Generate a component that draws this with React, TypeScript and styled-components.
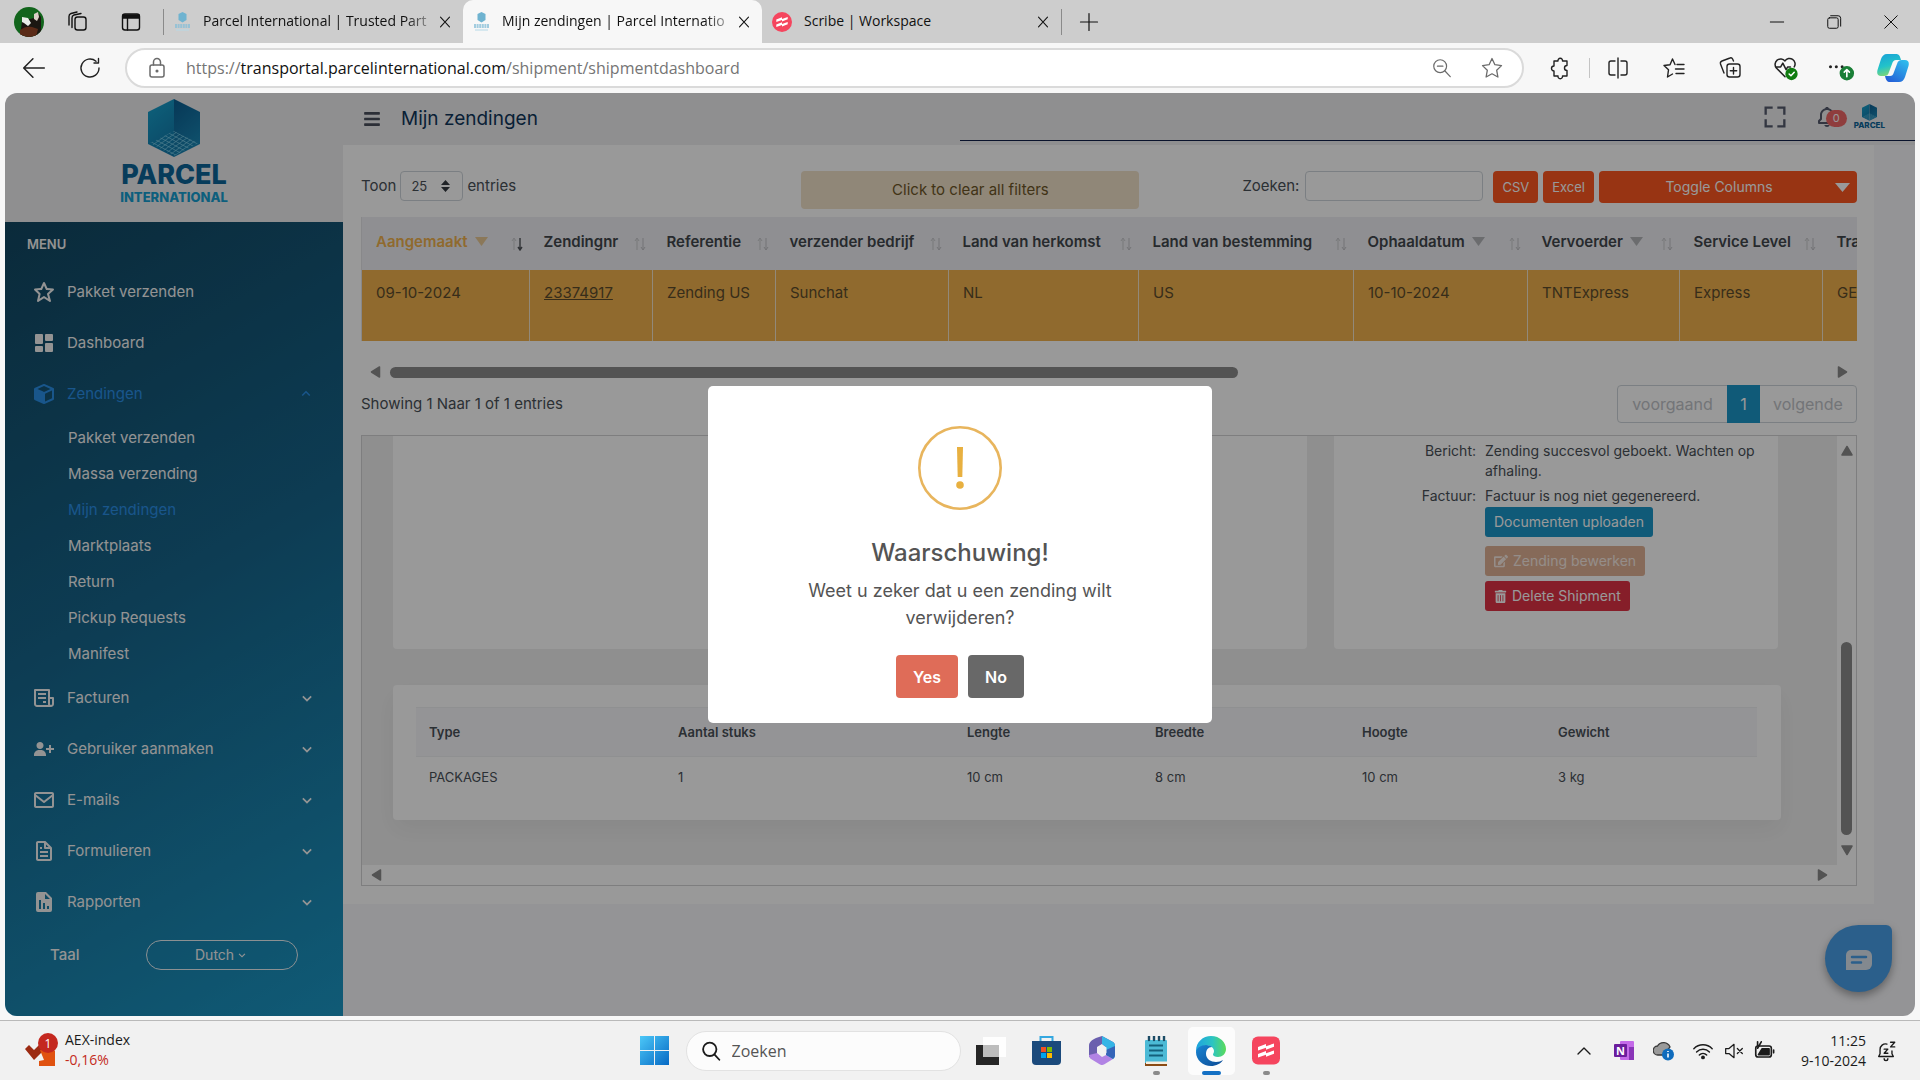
import React from "react";
import styled, { createGlobalStyle } from "styled-components";
import {
  BiStar, BiSolidDashboard, BiSolidCube, BiReceipt, BiSolidUserPlus, BiEnvelope, BiFile, BiSolidReport,
  BiChevronDown, BiChevronUp, BiFullscreen, BiBell,
} from "react-icons/bi";
import { FaEdit, FaTrashAlt, FaBars } from "react-icons/fa";

const ui = `Inter, "Open Sans", sans-serif`;
const system = `"Open Sans", "Noto Sans", sans-serif`;

const GlobalStyle = createGlobalStyle`
  *, *::before, *::after { box-sizing: border-box; }
  body { margin: 0; background: #f7f7f7; font-family: ${ui}; overflow: hidden; }
  button, input, select { font: inherit; color: inherit; }
  button { cursor: pointer; }
  h1, h2, p, ul, dl, dd, dt { margin: 0; padding: 0; }
  a { color: inherit; text-decoration: none; }
`;

/* ---------- window frame ---------- */

const Screen = styled.div`
  height: 100vh;
  display: flex;
  flex-direction: column;
`;

const TabStrip = styled.header`
  height: 43px;
  flex: none;
  display: flex;
  align-items: stretch;
  background: #cdcdcd;
  font: 14px/20px ${system};
  color: #111;
`;

const PlainButton = styled.button<{ $w: number }>`
  width: ${(p) => p.$w}px;
  flex: none;
  padding: 0;
  border: 0;
  background: none;
  display: flex;
  align-items: center;
  justify-content: center;
`;

const Profile = styled(PlainButton)`
  margin-left: 2px;
`;

const StripRule = styled.span`
  width: 1px;
  height: 26px;
  align-self: center;
  background: #8a8a8a;
`;

const Tab = styled.div<{ $active?: boolean }>`
  width: 299px;
  display: flex;
  align-items: center;
  padding: 0 6px 0 10px;
  background: ${(p) => (p.$active ? "#f7f7f7" : "transparent")};
  border-radius: 10px 10px 0 0;
`;

const TabTitle = styled.button<{ $fade?: boolean }>`
  flex: 1;
  min-width: 0;
  margin-left: 12px;
  padding: 0 0 2px;
  border: 0;
  background: none;
  text-align: left;
  white-space: nowrap;
  ${(p) => p.$fade && "mask-image: linear-gradient(90deg, #000 88%, rgba(0, 0, 0, 0.2));"}
`;

const WindowControls = styled.div`
  margin-left: auto;
  display: flex;
`;

const Toolbar = styled.div`
  height: 50px;
  flex: none;
  display: flex;
  align-items: center;
  padding: 0 3px 0 6px;
  background: #f7f7f7;
  color: #222;
`;

const AddressBar = styled.div`
  flex: 1;
  height: 40px;
  margin: 0 7px;
  display: flex;
  align-items: center;
  border: 2px solid #dadada;
  border-radius: 20px;
  background: #fff;
  color: #6b6b6b;
  padding: 0 5px 0 18px;
`;

const Address = styled.div`
  flex: 1;
  margin-left: 17px;
  font: 16px/24px ${system};
  color: #757575;
  white-space: nowrap;
  overflow: hidden;
  b { font-weight: 400; color: #111; }
`;

const ToolRule = styled.span`
  width: 1px;
  height: 20px;
  background: #c4c4c4;
`;

/* ---------- web page ---------- */

const Viewport = styled.div`
  flex: 1;
  min-height: 0;
  margin: 0 5px 4px;
  position: relative;
  display: flex;
  border-radius: 12px;
  overflow: hidden;
  background: #f7f7fa;
  color: #495057;
  font-size: 15px;
  line-height: 20px;
`;

const Sidebar = styled.aside`
  width: 338px;
  flex: none;
  display: flex;
  flex-direction: column;
`;

const Brand = styled.div`
  height: 129px;
  flex: none;
  padding-top: 6px;
  background: #eeeef1;
  display: flex;
  flex-direction: column;
  align-items: center;
`;

const BrandName = styled.strong`
  margin-top: 3px;
  font-weight: 800;
  font-size: 27px;
  line-height: 30px;
  color: #0c6598;
`;

const BrandSub = styled.span`
  font-weight: 800;
  font-size: 13px;
  line-height: 14px;
  color: #179fd0;
`;

const Menu = styled.nav`
  flex: 1;
  background: linear-gradient(150deg, #124762 0%, #16648a 45%, #1b97c5 100%);
  color: #f6f6f6;
`;

const MenuTitle = styled.div`
  height: 45px;
  padding: 12px 0 0 22px;
  font-size: 13px;
  font-weight: 600;
`;

const MenuItem = styled.a<{ $active?: boolean }>`
  height: 51px;
  display: grid;
  grid-template-columns: 24px 1fr 20px;
  column-gap: 11px;
  align-items: center;
  padding: 0 26px 2px 27px;
  color: ${(p) => (p.$active ? "#2a8fe8" : "inherit")};
`;

const SubMenu = styled.div`
  padding-bottom: 1px;
`;

const SubItem = styled.a<{ $active?: boolean }>`
  display: block;
  height: 36px;
  padding-left: 63px;
  line-height: 36px;
  color: ${(p) => (p.$active ? "#2a8fe8" : "inherit")};
`;

const Language = styled.div`
  display: flex;
  align-items: center;
  justify-content: space-between;
  padding: 12px 45px 0;
  label { font-weight: 500; }
`;

const LanguagePill = styled.div`
  width: 152px;
  height: 30px;
  display: flex;
  align-items: center;
  justify-content: center;
  border: 1px solid #e8f0f4;
  border-radius: 15px;
  font-size: 14px;
`;

const BareSelect = styled.select`
  appearance: none;
  border: 0;
  padding: 0;
  background: transparent;
`;

const Main = styled.main`
  flex: 1;
  min-width: 0;
`;

const PageHead = styled.div`
  height: 52px;
  display: flex;
  align-items: center;
  background: #eeeef1;
  padding: 0 30px 0 10px;
`;

const PageTitle = styled.h1`
  font-size: 19px;
  font-weight: 400;
  line-height: 24px;
  color: #10365a;
  margin-left: 10px;
`;

const HeadTools = styled.div`
  margin-left: auto;
  padding-bottom: 5px;
  display: flex;
  align-items: center;
  color: #555b6d;
`;

const BellButton = styled(PlainButton)`
  position: relative;
`;

const Badge = styled.span`
  position: absolute;
  left: 24px;
  top: 5px;
  width: 21px;
  height: 17px;
  border-radius: 9px;
  background: #ef6767;
  color: #fff;
  font-size: 11px;
  line-height: 17px;
  text-align: center;
`;

const MiniLogo = styled.span`
  display: flex;
  flex-direction: column;
  align-items: center;
  margin-left: 2px;
  font-size: 8px;
  line-height: 8px;
  font-weight: 800;
  color: #0c6598;
`;

const LoadLine = styled.div`
  height: 1px;
  margin-top: -5px;
  margin-left: 617px;
  background: #12204a;
`;

const Card = styled.section`
  margin: 4px 41px 0 0;
  padding: 26px 17px 18px 18px;
  background: #fff;
`;

const Controls = styled.div`
  display: flex;
  align-items: flex-start;
  height: 46px;
`;

const Length = styled.label`
  display: flex;
  align-items: center;
  gap: 4px;
  height: 30px;
`;

const LengthBox = styled.span`
  width: 63px;
  height: 30px;
  display: flex;
  align-items: center;
  justify-content: space-between;
  padding: 0 12px 0 10px;
  border: 1px solid #ced4da;
  border-radius: 4px;
  font-size: 13px;
  select { width: 24px; }
`;

const ClearFilters = styled.button`
  width: 338px;
  height: 38px;
  margin-left: auto;
  border: 0;
  border-radius: 4px;
  background: #f0e1c8;
  color: #6d5627;
`;

const Search = styled.label`
  display: flex;
  align-items: center;
  gap: 6px;
  height: 30px;
  margin-left: 103px;
`;

const SearchInput = styled.input`
  width: 178px;
  height: 30px;
  border: 1px solid #ced4da;
  border-radius: 4px;
  background: #fff;
`;

const ExportButtons = styled.div`
  display: flex;
  gap: 5px;
  margin-left: 10px;
`;

const OrangeButton = styled.button`
  height: 32px;
  padding: 0 9px;
  border: 0;
  border-radius: 4px;
  background: #fd5720;
  color: #fff;
  font-size: 13px;
`;

const ToggleBox = styled.div`
  width: 258px;
  height: 32px;
  margin-left: 5px;
  display: flex;
  align-items: center;
  padding: 0 7px 0 4px;
  border-radius: 4px;
  background: #fd5720;
  color: #fff;
  font-size: 14px;
  select { flex: 1; text-align: center; text-align-last: center; }
  option { color: #222; }
`;

const TableClip = styled.div`
  overflow: hidden;
`;

const ShipmentTable = styled.table`
  width: 100%;
  min-width: 1700px;
  table-layout: fixed;
  border-collapse: collapse;
  border-left: 1px solid #e3e3e6;
  th {
    height: 53px;
    padding: 0 7px 4px 14px;
    background: #eeeff3;
    font-weight: 600;
    text-align: left;
    white-space: nowrap;
  }
  td {
    height: 71px;
    padding: 13px 13px 13px 14px;
    vertical-align: top;
    background: #f0b14d;
    color: #5d4c2c;
    border-right: 1px solid #f3e5cb;
  }
  td a { text-decoration: underline; }
`;

const HeadCell = styled.div<{ $active?: boolean }>`
  display: flex;
  align-items: center;
  gap: 7px;
  color: ${(p) => (p.$active ? "#f0b14d" : "#41464c")};
  > :last-child { margin-left: auto; }
`;

const HScroll = styled.div`
  display: flex;
  align-items: center;
  gap: 8px;
  height: 20px;
  padding: 0 9px;
  color: #8a8a8a;
`;

const HTrack = styled.div`
  flex: 1;
`;

const HThumb = styled.div`
  width: 59%;
  height: 11px;
  border-radius: 6px;
  background: #8a8a8a;
`;

const TableScroll = styled(HScroll)`
  margin-top: 21px;
`;

const TableFoot = styled.div`
  display: flex;
  justify-content: space-between;
  align-items: center;
  margin-top: 3px;
  margin-bottom: 12px;
`;

const Pager = styled.div`
  display: flex;
  height: 38px;
  border: 1px solid #ced4da;
  border-radius: 4px;
  font-size: 16px;
`;

const PagerButton = styled.button<{ $current?: boolean; $w: number }>`
  width: ${(p) => p.$w}px;
  margin: -1px 0;
  padding: 0;
  border: 0;
  background: ${(p) => (p.$current ? "#1b96c8" : "transparent")};
  color: ${(p) => (p.$current ? "#fff" : "#bfc3c8")};
`;

const Detail = styled.section`
  border: 1px solid #d2d2d4;
  display: grid;
  grid-template-columns: 1fr 19px;
`;

const DetailBody = styled.div`
  background: #efefef;
  padding: 0 56px 45px 31px;
`;

const DetailTop = styled.div`
  display: grid;
  grid-template-columns: 1fr 444px;
  gap: 27px;
  padding-right: 3px;
`;

const Panel = styled.div`
  min-height: 213px;
  background: #fff;
  border-radius: 0 0 4px 4px;
`;

const Facts = styled(Panel)`
  display: grid;
  grid-template-columns: 142px 280px;
  grid-template-rows: 45px auto;
  column-gap: 9px;
  padding-top: 5px;
  font-size: 14px;
  dt { text-align: right; }
`;

const Actions = styled.div`
  display: flex;
  flex-direction: column;
  align-items: flex-start;
`;

const ActionButton = styled.button<{ $bg: string; $top?: number }>`
  height: 30px;
  margin-top: ${(p) => p.$top ?? 0}px;
  padding: 0 9px;
  border: 0;
  border-radius: 3px;
  display: flex;
  align-items: center;
  gap: 5px;
  background: ${(p) => p.$bg};
  color: #fff;
  font-size: 14px;
  &:disabled { color: #f8ece4; }
`;

const Packages = styled.div`
  margin-top: 36px;
  padding: 22px 24px 25px 23px;
  height: 135px;
  background: #fff;
  border-radius: 4px;
  box-shadow: 0 10px 24px rgba(0, 0, 0, 0.05);
`;

const PackageTable = styled.table`
  width: 100%;
  table-layout: fixed;
  border-collapse: collapse;
  font-size: 13px;
  th, td { text-align: left; padding: 0 13px; height: 49px; }
  th { background: #f7f7fb; font-weight: 600; border-bottom: 1px solid #eff0f2; border-top: 1px solid #eff0f2; }
  td { height: 40px; }
`;

const VScroll = styled.div`
  display: flex;
  flex-direction: column;
  align-items: center;
  padding: 9px 0 9px;
  color: #8a8a8a;
`;

const VThumb = styled.div`
  width: 11px;
  height: 193px;
  margin-top: auto;
  margin-bottom: 9px;
  border-radius: 6px;
  background: #8a8a8a;
`;

const DetailScroll = styled(HScroll)`
  justify-content: space-between;
`;

const Chat = styled.button`
  position: absolute;
  right: 23px;
  bottom: 24px;
  width: 67px;
  height: 67px;
  padding: 7px 0 0;
  border: 0;
  border-radius: 34px 6px 34px 34px;
  background: #489fe8;
  box-shadow: 0 4px 8px rgba(0, 0, 0, 0.35);
`;

/* ---------- dialog ---------- */

const Backdrop = styled.div`
  position: absolute;
  inset: 0;
  display: flex;
  align-items: center;
  justify-content: center;
  background: rgba(0, 0, 0, 0.4);
`;

const Dialog = styled.div`
  width: 504px;
  padding: 40px 60px 25px;
  display: flex;
  flex-direction: column;
  align-items: center;
  border-radius: 5px;
  background: #fff;
  color: #545454;
  text-align: center;
  h2 { margin-top: 26px; font-size: 24px; line-height: 34px; font-weight: 500; }
  p { margin-top: 7px; font-size: 18px; line-height: 27px; }
`;

const DialogButtons = styled.div`
  display: flex;
  gap: 10px;
  margin-top: 24px;
`;

const DialogButton = styled.button<{ $bg: string }>`
  height: 43px;
  padding: 0 17px;
  border: 0;
  border-radius: 4px;
  background: ${(p) => p.$bg};
  color: #fff;
  font-size: 16px;
  font-weight: 600;
`;

/* ---------- taskbar ---------- */

const Taskbar = styled.footer`
  height: 60px;
  flex: none;
  display: grid;
  grid-template-columns: 1fr auto 1fr;
  align-items: center;
  border-top: 1px solid #b9b9b9;
  background: #f1f1f1;
  color: #1b1b1b;
  font: 14px/20px ${system};
`;

const Widget = styled.button`
  justify-self: start;
  margin-left: 25px;
  padding: 0 0 2px;
  border: 0;
  background: none;
  display: flex;
  align-items: center;
  gap: 6px;
  text-align: left;
  line-height: 20px;
  small { display: block; font-size: 14px; color: #c42b1c; }
`;

const Dock = styled.div`
  display: flex;
  align-items: center;
`;

const DockButton = styled.button<{ $open?: boolean; $focus?: boolean }>`
  width: 47px;
  height: 48px;
  margin: 0 4px;
  padding: 0;
  border: 0;
  border-radius: 5px;
  display: flex;
  align-items: center;
  justify-content: center;
  position: relative;
  background: ${(p) => (p.$focus ? "#fcfcfc" : "transparent")};
  &::after {
    content: "";
    position: absolute;
    bottom: 0;
    width: ${(p) => (p.$focus ? 19 : 7)}px;
    height: 4px;
    border-radius: 2px;
    background: ${(p) => (p.$focus ? "#1470c4" : p.$open ? "#8b8b8b" : "transparent")};
  }
`;

const DockSearch = styled.label`
  width: 275px;
  height: 40px;
  margin: 0 3px 0 4px;
  display: flex;
  align-items: center;
  gap: 11px;
  padding: 0 14px;
  border: 1px solid #e2e2e2;
  border-radius: 20px;
  background: #fcfcfc;
  input {
    flex: 1;
    min-width: 0;
    border: 0;
    padding: 0;
    background: none;
    outline: none;
    font-size: 16px;
  }
  input::placeholder { color: #555; opacity: 1; }
`;

const Tray = styled.div`
  justify-self: end;
  display: flex;
  align-items: center;
  padding-right: 14px;
`;

const Clock = styled.div`
  width: 84px;
  text-align: right;
  white-space: nowrap;
`;

/* ---------- drawings ---------- */

const Line = ({ size = 22, w = 1.4, children }: { size?: number; w?: number; children: React.ReactNode }) => (
  <svg width={size} height={size} viewBox="0 0 24 24" fill="none" stroke="currentColor" strokeWidth={w} strokeLinecap="round" strokeLinejoin="round" aria-hidden>
    {children}
  </svg>
);

const CloseIcon = () => <Line size={18}><path d="M6 5.5l12 13M18 5.5l-12 13" /></Line>;

const Cube = ({ size }: { size: number }) => (
  <svg width={size} height={(size * 58) / 52} viewBox="0 0 52 58" aria-hidden>
    <defs>
      <linearGradient id="cubeRight" x1="0" y1="0" x2="0.4" y2="1"><stop offset="0" stopColor="#0b5d90" /><stop offset="1" stopColor="#1a86b4" /></linearGradient>
      <linearGradient id="cubeLeft" x1="0" y1="0" x2="0.4" y2="1"><stop offset="0" stopColor="#18a4cf" /><stop offset="1" stopColor="#127bac" /></linearGradient>
      <pattern id="cubeGrid" width="4" height="4" patternUnits="userSpaceOnUse" patternTransform="rotate(28) skewX(-26)">
        <path d="M0 0H4M0 0V4" stroke="#7fd0ea" strokeWidth="1.3" />
      </pattern>
    </defs>
    <path d="M26 0L0 13v32l26 13z" fill="url(#cubeLeft)" />
    <path d="M26 0l26 13v32L26 58z" fill="url(#cubeRight)" />
    <path d="M26 32l24 12-24 13L2 44z" fill="url(#cubeGrid)" />
  </svg>
);

const Favicon = () => (
  <svg width="17" height="20" viewBox="0 0 17 20" aria-hidden>
    <path d="M8.500 0l4 2v6l-4 2.500-4-2.500v-6z" fill="#6fb3d0" />
    <path d="M1 13h15M1 15h15" stroke="#86bfd8" strokeWidth="1.600" strokeDasharray="2 .6" />
    <path d="M2 18h13" stroke="#b5d9e8" />
  </svg>
);

const ScribeMark = ({ round }: { round?: boolean }) => (
  <svg width={round ? 20 : 28} height={round ? 20 : 29} viewBox="0 0 28 28" aria-hidden>
    <rect width="28" height="28" rx={round ? 14 : 6} fill="#f5455e" />
    <path d="M6 10.500l8-3v2.200l8-2.700v3.300l-8 3v-2.100l-8 2.700z" fill="#fff" />
    <path d="M6 17.500l8-3v2.200l8-2.700v3.300l-8 3v-2.100l-8 2.700z" fill="#fff" />
  </svg>
);

const SortArrows = ({ desc }: { desc?: boolean }) => (
  <svg width="12" height="18" viewBox="0 0 12 18" fill="none" aria-hidden>
    <path d="M3 17V5M1 8l2-3 2 3" stroke="#c9cacd" />
    <path d="M9 5v12M7 14l2 3 2-3" stroke={desc ? "#50545a" : "#c0c1c5"} strokeWidth={desc ? 1.4 : 1} />
  </svg>
);

const Funnel = ({ active }: { active?: boolean }) => (
  <svg width="13" height="9" viewBox="0 0 13 9" aria-hidden><path d="M0 0h13L6.500 9z" fill={active ? "#e8c894" : "#b3b4b8"} /></svg>
);

const Arrow = ({ dir }: { dir: "left" | "right" | "up" | "down" }) => {
  const d = { left: "M9.500 1v10L1.500 6z", right: "M2.500 1v10l8-5z", up: "M1 10h10L6 1.500z", down: "M1 2h10L6 10.500z" }[dir];
  return (
    <svg width="12" height="12" viewBox="0 0 12 12" aria-hidden>
      <path d={d} fill="currentColor" stroke="currentColor" strokeWidth="1.500" strokeLinejoin="round" />
    </svg>
  );
};

const Copilot = () => (
  <svg width="32" height="28" viewBox="0 0 32 28" aria-hidden>
    <defs>
      <linearGradient id="cpA" x1="0" y1="0" x2="0.3" y2="1"><stop offset="0" stopColor="#18a0d8" /><stop offset=".6" stopColor="#22c3c9" /><stop offset="1" stopColor="#7bd67a" /></linearGradient>
      <linearGradient id="cpB" x1="1" y1="0" x2="0.3" y2="1"><stop offset="0" stopColor="#2ec4ef" /><stop offset="1" stopColor="#2563d8" /></linearGradient>
    </defs>
    <path d="M10 0h9c3 0 4 2 5 6h-5c-2 0-3 1-4 4l-3 8c-1 3-2 4-5 4H4c-3 0-4.500-2-3.500-6L4 5c1-3 3-5 6-5z" fill="url(#cpA)" />
    <path d="M22 28h-9c-3 0-4-2-5-6h5c2 0 3-1 4-4l3-8c1-3 2-4 5-4h3c3 0 4.500 2 3.500 6L28 23c-1 3-3 5-6 5z" fill="url(#cpB)" />
  </svg>
);

/* ---------- data ---------- */

const columns: { label: string; value: React.ReactNode; width?: number; filter?: boolean; active?: boolean }[] = [
  { label: "Aangemaakt", value: "09-10-2024", width: 168, filter: true, active: true },
  { label: "Zendingnr", value: <a href="#23374917">23374917</a>, width: 123 },
  { label: "Referentie", value: "Zending US", width: 123 },
  { label: "verzender bedrijf", value: "Sunchat", width: 173 },
  { label: "Land van herkomst", value: "NL", width: 190 },
  { label: "Land van bestemming", value: "US", width: 215 },
  { label: "Ophaaldatum", value: "10-10-2024", width: 174, filter: true },
  { label: "Vervoerder", value: "TNTExpress", width: 152, filter: true },
  { label: "Service Level", value: "Express", width: 143 },
  { label: "Tra", value: "GE" },
];

const packageColumns: [string, string, number][] = [
  ["Type", "PACKAGES", 249],
  ["Aantal stuks", "1", 289],
  ["Lengte", "10 cm", 188],
  ["Breedte", "8 cm", 207],
  ["Hoogte", "10 cm", 196],
  ["Gewicht", "3 kg", 212],
];

const mainItems = [
  { label: "Pakket verzenden", icon: BiStar },
  { label: "Dashboard", icon: BiSolidDashboard },
];
const subItems = ["Pakket verzenden", "Massa verzending", "Mijn zendingen", "Marktplaats", "Return", "Pickup Requests", "Manifest"];
const groups = [
  { label: "Facturen", icon: BiReceipt },
  { label: "Gebruiker aanmaken", icon: BiSolidUserPlus },
  { label: "E-mails", icon: BiEnvelope },
  { label: "Formulieren", icon: BiFile },
  { label: "Rapporten", icon: BiSolidReport },
];

/* ---------- sections ---------- */

const BrowserChrome = () => (
  <>
    <TabStrip>
      <Profile $w={53} aria-label="Profiel">
        <svg width="30" height="30" viewBox="0 0 30 30" aria-hidden>
          <defs><clipPath id="face"><circle cx="15" cy="15" r="15" /></clipPath></defs>
          <g clipPath="url(#face)">
            <rect width="30" height="30" fill="#12651c" />
            <path d="M8 14l12-3 4-5 3 4v20H6z" fill="#1b1712" />
            <path d="M8 10l6 1 3 5-3 3-4-3-2-1z" fill="#e9eee8" />
            <path d="M20 7l4-2 1 5-2 4-3-2z" fill="#d9cfc6" />
            <path d="M6 23c4-3 8-4 12-3l6 2-2 8H6z" fill="#5b2b18" />
          </g>
        </svg>
      </Profile>
      <PlainButton $w={44} aria-label="Werkruimten">
        <Line size={24}><rect x="10" y="7" width="11" height="13" rx="2.500" /><path d="M7 17.500V8a3 3 0 0 1 2-3l7-1.500M4 15V6.500a3 3 0 0 1 2-3l6-1.500" /></Line>
      </PlainButton>
      <PlainButton $w={64} aria-label="Tabbladacties">
        <Line size={24}><rect x="3.500" y="4" width="17" height="16" rx="2.500" /><path d="M4 5h16v3H4z" fill="currentColor" /><path d="M8.500 8v12" /></Line>
      </PlainButton>
      <StripRule />
      <Tab>
        <Favicon />
        <TabTitle $fade>Parcel International | Trusted Part</TabTitle>
        <PlainButton $w={24} aria-label="Sluiten"><CloseIcon /></PlainButton>
      </Tab>
      <Tab $active>
        <Favicon />
        <TabTitle $fade>Mijn zendingen | Parcel Internatio</TabTitle>
        <PlainButton $w={24} aria-label="Sluiten"><CloseIcon /></PlainButton>
      </Tab>
      <Tab>
        <ScribeMark round />
        <TabTitle>Scribe | Workspace</TabTitle>
        <PlainButton $w={24} aria-label="Sluiten"><CloseIcon /></PlainButton>
      </Tab>
      <StripRule />
      <PlainButton $w={54} aria-label="Nieuw tabblad"><Line size={24} w={1.2}><path d="M12 3.500v17M3.500 12h17" /></Line></PlainButton>
      <WindowControls>
        <PlainButton $w={57} aria-label="Minimaliseren"><Line size={20} w={1.2}><path d="M4 12h16" /></Line></PlainButton>
        <PlainButton $w={57} aria-label="Verkleinen"><Line size={20} w={1.2}><rect x="4.500" y="7" width="12.500" height="12.500" rx="2" /><path d="M8 4.500h9a3 3 0 0 1 3 3V17" /></Line></PlainButton>
        <PlainButton $w={58} aria-label="Venster sluiten"><Line size={20} w={1.2}><path d="M4.500 4.500l15 15M19.500 4.500l-15 15" /></Line></PlainButton>
      </WindowControls>
    </TabStrip>
    <Toolbar>
      <PlainButton $w={56} aria-label="Terug"><Line size={26}><path d="M21.500 12H3M11 3.500L2.500 12l8.500 8.500" /></Line></PlainButton>
      <PlainButton $w={56} aria-label="Vernieuwen"><Line size={24}><path d="M21 12a9 9 0 1 1-3-6.700M20.500 2.500V7H16" /></Line></PlainButton>
      <AddressBar>
        <Line size={24} w={1.5}><rect x="5" y="9" width="14" height="12" rx="2" /><path d="M8.500 9V6a3.500 3.500 0 0 1 7 0v3" /><circle cx="12" cy="15" r=".8" fill="currentColor" /></Line>
        <Address role="textbox" aria-label="Adres" tabIndex={0}>https://<b>transportal.parcelinternational.com</b>/shipment/shipmentdashboard</Address>
        <PlainButton $w={50} aria-label="Zoom"><Line size={22} w={1.3}><circle cx="10" cy="10" r="7" /><path d="M15 15l6 6.500M7 10h6" /></Line></PlainButton>
        <PlainButton $w={50} aria-label="Favoriet"><Line size={24} w={1.3}><path d="M12 2.500l2.900 6.200 6.600.9-4.800 4.700 1.200 6.700-5.900-3.200L6.100 21l1.200-6.700L2.500 9.600l6.600-.9z" /></Line></PlainButton>
      </AddressBar>
      <PlainButton $w={58} aria-label="Extensies">
        <Line size={24}><path d="M6 5h4a2.300 2.300 0 1 1 4.500 0H19v4.500a2.300 2.300 0 1 0 0 5V20h-4.500a2.300 2.300 0 1 1-4.500 0H6v-5a2.500 2.500 0 1 1 0-5z" /></Line>
      </PlainButton>
      <ToolRule />
      <PlainButton $w={56} aria-label="Splitsen"><Line size={24}><path d="M12 2v20M9 5H5a2 2 0 0 0-2 2v10a2 2 0 0 0 2 2h4M15 5h4a2 2 0 0 1 2 2v10a2 2 0 0 1-2 2h-4" /></Line></PlainButton>
      <PlainButton $w={56} aria-label="Favorieten"><Line size={24}><path d="M13 8.500l-2.500-5.500L8 8.700l-6 .8 4.500 4.300L5.500 21l5-3M15 8.500h7M13.500 13H22M14 17.500h8" /></Line></PlainButton>
      <PlainButton $w={55} aria-label="Verzamelingen"><Line size={24}><rect x="9" y="8" width="13" height="13" rx="2.500" /><path d="M15.500 11.500v6.500M12.300 14.700h6.400M6 17l-3.500-9A2.500 2.500 0 0 1 4 5l8-3a2 2 0 0 1 2.600 1l.9 2" /></Line></PlainButton>
      <PlainButton $w={56} aria-label="Prestaties">
        <Line size={26}><path d="M12 20l-8-8a5 5 0 0 1 8-6.500A5 5 0 0 1 20.500 11M3.500 11H8l2-3.500 3 6 1.500-2.500H17" /><circle cx="18" cy="17.500" r="5" fill="#107c10" stroke="#107c10" /><path d="M15.800 17.500l1.700 1.700 3-3.200" stroke="#fff" /></Line>
      </PlainButton>
      <PlainButton $w={56} aria-label="Instellingen en meer">
        <Line size={28}><g fill="currentColor" stroke="none"><circle cx="3" cy="11" r="1.300" /><circle cx="8" cy="11" r="1.300" /><circle cx="13" cy="11" r="1.300" /></g><circle cx="17" cy="16.500" r="5.500" fill="#1a7f37" stroke="#1a7f37" /><path d="M17 19.500v-6M14.800 15.500l2.200-2.200 2.200 2.200" stroke="#fff" /></Line>
      </PlainButton>
      <PlainButton $w={48} aria-label="Copilot"><Copilot /></PlainButton>
    </Toolbar>
  </>
);

const SideMenu = () => (
  <Sidebar>
    <Brand>
      <Cube size={52} />
      <BrandName>PARCEL</BrandName>
      <BrandSub>INTERNATIONAL</BrandSub>
    </Brand>
    <Menu>
      <MenuTitle>MENU</MenuTitle>
      {mainItems.map(({ label, icon: Icon }) => (
        <MenuItem key={label} href="#menu"><Icon size={24} />{label}</MenuItem>
      ))}
      <MenuItem href="#zendingen" $active><BiSolidCube size={24} />Zendingen<BiChevronUp size={18} /></MenuItem>
      <SubMenu>
        {subItems.map((label) => (
          <SubItem key={label} href="#sub" $active={label === "Mijn zendingen"}>{label}</SubItem>
        ))}
      </SubMenu>
      {groups.map(({ label, icon: Icon }) => (
        <MenuItem key={label} href="#menu"><Icon size={24} />{label}<BiChevronDown size={20} /></MenuItem>
      ))}
      <Language>
        <label htmlFor="language">Taal</label>
        <LanguagePill>
          <BareSelect id="language" defaultValue="Dutch"><option>Dutch</option></BareSelect>
          <BiChevronDown size={14} />
        </LanguagePill>
      </Language>
    </Menu>
  </Sidebar>
);

const Shipments = () => (
  <TableClip>
    <ShipmentTable>
      <colgroup>{columns.map((c) => <col key={c.label} width={c.width} />)}</colgroup>
      <thead>
        <tr>
          {columns.map((c) => (
            <th key={c.label} scope="col">
              <HeadCell $active={c.active}>
                {c.label}
                {c.filter && <Funnel active={c.active} />}
                <SortArrows desc={c.active} />
              </HeadCell>
            </th>
          ))}
        </tr>
      </thead>
      <tbody><tr>{columns.map((c) => <td key={c.label}>{c.value}</td>)}</tr></tbody>
    </ShipmentTable>
  </TableClip>
);

const ShipmentDetail = () => (
  <Detail>
    <DetailBody>
      <DetailTop>
        <Panel />
        <Facts as="dl">
          <dt>Bericht:</dt>
          <dd>Zending succesvol geboekt. Wachten op afhaling.</dd>
          <dt>Factuur:</dt>
          <dd>
            Factuur is nog niet gegenereerd.
            <Actions>
              <ActionButton $bg="#1b96c8" $top={1}>Documenten uploaden</ActionButton>
              <ActionButton $bg="#dfb194" $top={9} disabled><FaEdit size={14} />Zending bewerken</ActionButton>
              <ActionButton $bg="#df3245" $top={5}><FaTrashAlt size={13} />Delete Shipment</ActionButton>
            </Actions>
          </dd>
        </Facts>
      </DetailTop>
      <Packages>
        <PackageTable>
          <colgroup>{packageColumns.map(([h, , w]) => <col key={h} width={w} />)}</colgroup>
          <thead><tr>{packageColumns.map(([h]) => <th key={h} scope="col">{h}</th>)}</tr></thead>
          <tbody><tr>{packageColumns.map(([h, v]) => <td key={h}>{v}</td>)}</tr></tbody>
        </PackageTable>
      </Packages>
    </DetailBody>
    <VScroll><Arrow dir="up" /><VThumb /><Arrow dir="down" /></VScroll>
    <DetailScroll><Arrow dir="left" /><Arrow dir="right" /></DetailScroll>
  </Detail>
);

const WarningDialog = () => (
  <Backdrop>
    <Dialog role="alertdialog" aria-labelledby="dlg-title" aria-describedby="dlg-text">
      <svg width="84" height="84" viewBox="0 0 84 84" aria-hidden>
        <circle cx="42" cy="42" r="40.700" fill="none" stroke="#e8b55d" strokeWidth="2.600" />
        <path d="M39 21h6l-.7 30h-4.600z" fill="#e8b040" />
        <circle cx="42" cy="59" r="3.800" fill="#e8b040" />
      </svg>
      <h2 id="dlg-title">Waarschuwing!</h2>
      <p id="dlg-text">Weet u zeker dat u een zending wilt verwijderen?</p>
      <DialogButtons>
        <DialogButton $bg="#df6c58">Yes</DialogButton>
        <DialogButton $bg="#686868">No</DialogButton>
      </DialogButtons>
    </Dialog>
  </Backdrop>
);

const SystemTaskbar = () => (
  <Taskbar>
    <Widget>
      <svg width="34" height="36" viewBox="0 0 34 36" aria-hidden>
        <path d="M0 17l4-4 5 5 7-7 5 5-12 12z" fill="#9c2b12" />
        <path d="M15 18l10-4 5 5v15H14v-5l5-1z" fill="#e05210" />
        <circle cx="23" cy="11" r="10" fill="#c4281f" />
        <text x="23" y="15.500" fontSize="12" fill="#fff" textAnchor="middle">1</text>
      </svg>
      <span>AEX-index<small>-0,16%</small></span>
    </Widget>
    <Dock>
      <DockButton aria-label="Start">
        <svg width="29" height="29" viewBox="0 0 29 29" aria-hidden>
          <defs><linearGradient id="win" x1="0" y1="0" x2="1" y2="1"><stop offset="0" stopColor="#4cc8f8" /><stop offset="1" stopColor="#0669c4" /></linearGradient></defs>
          <path d="M0 0h14v14H0zM15 0h14v14H15zM0 15h14v14H0zM15 15h14v14H15z" fill="url(#win)" />
        </svg>
      </DockButton>
      <DockSearch>
        <Line size={20} w={2.2}><circle cx="10.500" cy="10" r="8" /><path d="M16 16l6 6.500" /></Line>
        <input placeholder="Zoeken" aria-label="Zoeken" />
      </DockSearch>
      <DockButton aria-label="Taakweergave">
        <svg width="30" height="28" viewBox="0 0 30 28" aria-hidden><rect y="8" width="23" height="20" fill="#262626" /><rect x="7" width="23" height="20" fill="#fff" opacity=".9" /><rect x="7" y="8" width="16" height="12" fill="#bdbdbd" /></svg>
      </DockButton>
      <DockButton aria-label="Microsoft Store">
        <svg width="29" height="29" viewBox="0 0 29 29" aria-hidden><path d="M8.500 6V1h12v5" fill="none" stroke="#35a8e0" strokeWidth="2" /><path d="M0 5h29v20a4 4 0 0 1-4 4H4a4 4 0 0 1-4-4z" fill="#1b4a7c" /><path d="M9 11h5v5H9z" fill="#f25022" /><path d="M15 11h5v5h-5z" fill="#7fba00" /><path d="M9 17h5v5H9z" fill="#00a4ef" /><path d="M15 17h5v5h-5z" fill="#ffb900" /></svg>
      </DockButton>
      <DockButton aria-label="Microsoft 365">
        <svg width="27" height="29" viewBox="0 0 27 29" aria-hidden>
          <path d="M8 2l6-2 11 6c1.500 1 2 2 2 4v9l-8-6-5-5-5 3v8l-8 2V10C1 6 4 4 8 2z" fill="#6a5fae" />
          <path d="M14 0l11 6c1.500 1 2 2 2 4v9c0 2-1 3-2 4l-7-4V11l-4-3z" fill="#35b5e6" />
          <path d="M1 19l8-2 5 4 4-2 7 4-9 5.500c-1.500.7-3 .7-4 0L3 23c-1.500-1-2-2.500-2-4z" fill="#b183e4" />
          <path d="M27 10v9c0 2-1 3-2 4l-7-4v-5z" fill="#3564b8" />
          <path d="M14 8.500l4.500 3v5.500L14 20l-4.500-3v-5.500z" fill="#f1f1f1" />
        </svg>
      </DockButton>
      <DockButton $open aria-label="Kladblok">
        <svg width="23" height="30" viewBox="0 0 23 30" aria-hidden><rect y="4" width="22" height="25" rx="1" fill="#4cbad6" /><path d="M0 27h22v3H0z" fill="#8a4b14" /><path d="M1 25.500h21V28H1z" fill="#f7efe0" /><path d="M4 0v4M9 0v4M14 0v4M19 0v4" stroke="#1c4c66" strokeWidth="2.400" strokeLinecap="round" /><path d="M4 9.500h14M4 14.500h14M4 19.500h14" stroke="#14607c" strokeWidth="2" /></svg>
      </DockButton>
      <DockButton $open $focus aria-label="Edge">
        <svg width="30" height="30" viewBox="0 0 30 30" aria-hidden>
          <defs>
            <linearGradient id="eg1" x1="0" y1="0.300" x2="1" y2="0.300"><stop offset="0" stopColor="#1fa3e0" /><stop offset=".55" stopColor="#2cc4c2" /><stop offset="1" stopColor="#5bdb58" /></linearGradient>
            <linearGradient id="eg2" x1="0" y1="0" x2="1" y2="1"><stop offset="0" stopColor="#1986d4" /><stop offset="1" stopColor="#0c4a94" /></linearGradient>
          </defs>
          <path d="M0 15C0 6 7 0 15 0c9 0 15 6.500 15 13 0 5-4 8-8 8-3 0-5-1-5-2.500 0-1 1-1.500 1-3.500 0-3-3-5.500-7-5.500C5.500 9.500 1 13 0 17z" fill="url(#eg1)" />
          <path d="M0 16c.5-4 5-7 10-7 3 0 5 1 6 2-4 0-6 3-6 7 0 5 5 8 10 8 3 0 5-1 7-2-2 3.500-7 6-12 6C7 30 0 24 0 16z" fill="url(#eg2)" />
        </svg>
      </DockButton>
      <DockButton $open aria-label="Scribe"><ScribeMark /></DockButton>
    </Dock>
    <Tray>
      <PlainButton $w={40} aria-label="Verborgen pictogrammen"><Line size={18} w={1.8}><path d="M4 16l8-8 8 8" /></Line></PlainButton>
      <PlainButton $w={40} aria-label="OneNote">
        <svg width="20" height="19" viewBox="0 0 20 19" aria-hidden><rect x="6" width="14" height="19" rx="1" fill="#c46ae8" /><path d="M15 6h5v13h-5z" fill="#8a35b8" /><rect y="3" width="13" height="13" rx="1" fill="#6b1d9c" /><text x="6.500" y="13.500" fontSize="11" fontWeight="700" fill="#fff" textAnchor="middle">N</text></svg>
      </PlainButton>
      <PlainButton $w={40} aria-label="OneDrive">
        <svg width="22" height="20" viewBox="0 0 22 20" aria-hidden><path d="M5 14a4.500 4.500 0 0 1-.5-9A7 7 0 0 1 17 6l-6 8z" fill="#9a9a9a" stroke="#3a3a3a" strokeWidth="1.300" /><circle cx="15" cy="13.500" r="6" fill="#0f6cbd" /><path d="M15 12.500v4M15 10v1" stroke="#fff" strokeWidth="1.600" /></svg>
      </PlainButton>
      <PlainButton $w={38} aria-label="Wifi"><Line size={22} w={1.6}><path d="M2 9.500a14 14 0 0 1 20 0M5 13a10 10 0 0 1 14 0M8 16.300a5.800 5.800 0 0 1 8 0" /><circle cx="12" cy="19" r="1.300" fill="currentColor" /></Line></PlainButton>
      <PlainButton $w={24} aria-label="Geluid gedempt"><Line size={20} w={1.5}><path d="M2 9v6h4l6 5V4L6 9zM16 9l6 6M22 9l-6 6" /></Line></PlainButton>
      <PlainButton $w={36} aria-label="Batterij"><Line size={22} w={1.8}><rect x="3" y="6.500" width="17" height="12" rx="2.500" /><path d="M22.500 11v3" /><path d="M6 16l4-6.500h7.500V16z" fill="currentColor" /><path d="M5 2v4M9 2L5 9" /></Line></PlainButton>
      <Clock>11:25<br />9-10-2024</Clock>
      <PlainButton $w={40} aria-label="Meldingen"><Line size={22} w={1.5}><path d="M13 4.500a6 6 0 0 0-7.500 6V15L4 18h16l-1.500-3v-3M10 20.500a2 2 0 0 0 4 0M10 10h4l-4 4.500h4M17 2.500h4.500L17 7.500h4.500" /></Line></PlainButton>
    </Tray>
  </Taskbar>
);

export default function App() {
  return (
    <Screen>
      <GlobalStyle />
      <BrowserChrome />
      <Viewport>
        <SideMenu />
        <Main>
          <PageHead>
            <PlainButton $w={38} aria-label="Menu"><FaBars size={18} color="#4a4f5c" /></PlainButton>
            <PageTitle>Mijn zendingen</PageTitle>
            <HeadTools>
              <PlainButton $w={54} aria-label="Volledig scherm"><BiFullscreen size={28} /></PlainButton>
              <BellButton $w={50} aria-label="Meldingen"><BiBell size={24} /><Badge>0</Badge></BellButton>
              <MiniLogo><Cube size={15} />PARCEL</MiniLogo>
            </HeadTools>
          </PageHead>
          <LoadLine />
          <Card>
            <Controls>
              <Length>
                Toon
                <LengthBox>
                  <BareSelect aria-label="Aantal entries" defaultValue="25"><option>25</option></BareSelect>
                  <svg width="9" height="12" viewBox="0 0 9 12" aria-hidden><path d="M0 5l4.500-5L9 5zM0 7h9l-4.500 5z" fill="#343a40" /></svg>
                </LengthBox>
                entries
              </Length>
              <ClearFilters>Click to clear all filters</ClearFilters>
              <Search>Zoeken:<SearchInput type="search" /></Search>
              <ExportButtons>
                <OrangeButton>CSV</OrangeButton>
                <OrangeButton>Excel</OrangeButton>
              </ExportButtons>
              <ToggleBox>
                <BareSelect aria-label="Toggle Columns" defaultValue="Toggle Columns"><option>Toggle Columns</option></BareSelect>
                <svg width="15" height="9" viewBox="0 0 15 9" aria-hidden><path d="M0 0h15L7.500 9z" fill="#fff" /></svg>
              </ToggleBox>
            </Controls>
            <Shipments />
            <TableScroll><Arrow dir="left" /><HTrack><HThumb /></HTrack><Arrow dir="right" /></TableScroll>
            <TableFoot>
              <p>Showing 1 Naar 1 of 1 entries</p>
              <Pager>
                <PagerButton $w={109} disabled>voorgaand</PagerButton>
                <PagerButton $w={33} $current>1</PagerButton>
                <PagerButton $w={96} disabled>volgende</PagerButton>
              </Pager>
            </TableFoot>
            <ShipmentDetail />
          </Card>
        </Main>
        <Chat aria-label="Chat">
          <svg width="26" height="20" viewBox="0 0 26 20" aria-hidden><path d="M5 0h15a6 6 0 0 1 6 6v8a6 6 0 0 1-6 6H0V5a5 5 0 0 1 5-5z" fill="#dbe4ee" /><path d="M6 7h14M6 12.500h9" stroke="#489fe8" strokeWidth="2.500" strokeLinecap="round" /></svg>
        </Chat>
        <WarningDialog />
      </Viewport>
      <SystemTaskbar />
    </Screen>
  );
}
